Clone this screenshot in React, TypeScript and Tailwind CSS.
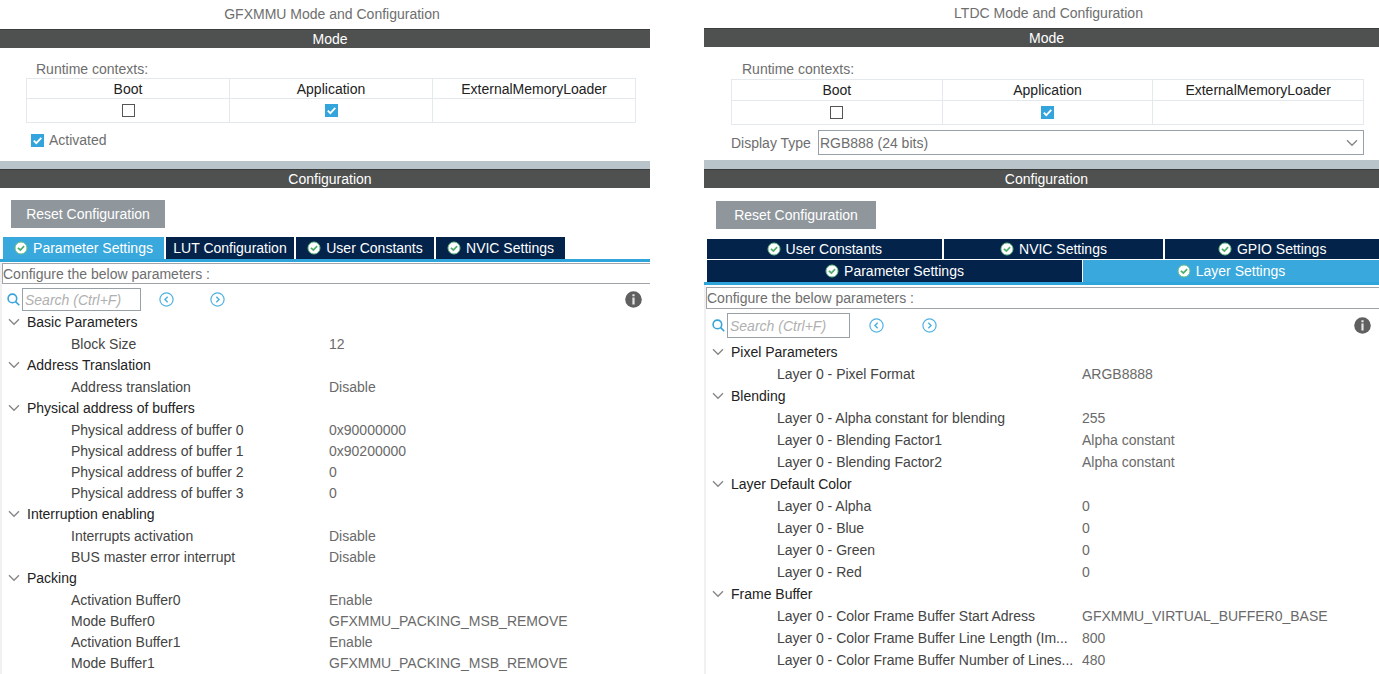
import { useState } from "react";
import type { ReactNode } from "react";

type Group = { name: string; rows: [string, string][] };

const gfxGroups: Group[] = [
  { name: "Basic Parameters", rows: [["Block Size", "12"]] },
  { name: "Address Translation", rows: [["Address translation", "Disable"]] },
  {
    name: "Physical address of buffers",
    rows: [
      ["Physical address of buffer 0", "0x90000000"],
      ["Physical address of buffer 1", "0x90200000"],
      ["Physical address of buffer 2", "0"],
      ["Physical address of buffer 3", "0"],
    ],
  },
  {
    name: "Interruption enabling",
    rows: [
      ["Interrupts activation", "Disable"],
      ["BUS master error interrupt", "Disable"],
    ],
  },
  {
    name: "Packing",
    rows: [
      ["Activation Buffer0", "Enable"],
      ["Mode Buffer0", "GFXMMU_PACKING_MSB_REMOVE"],
      ["Activation Buffer1", "Enable"],
      ["Mode Buffer1", "GFXMMU_PACKING_MSB_REMOVE"],
    ],
  },
];

const ltdcGroups: Group[] = [
  { name: "Pixel Parameters", rows: [["Layer 0 - Pixel Format", "ARGB8888"]] },
  {
    name: "Blending",
    rows: [
      ["Layer 0 - Alpha constant for blending", "255"],
      ["Layer 0 - Blending Factor1", "Alpha constant"],
      ["Layer 0 - Blending Factor2", "Alpha constant"],
    ],
  },
  {
    name: "Layer Default Color",
    rows: [
      ["Layer 0 - Alpha", "0"],
      ["Layer 0 - Blue", "0"],
      ["Layer 0 - Green", "0"],
      ["Layer 0 - Red", "0"],
    ],
  },
  {
    name: "Frame Buffer",
    rows: [
      ["Layer 0 - Color Frame Buffer Start Adress", "GFXMMU_VIRTUAL_BUFFER0_BASE"],
      ["Layer 0 - Color Frame Buffer Line Length (Im...", "800"],
      ["Layer 0 - Color Frame Buffer Number of Lines...", "480"],
    ],
  },
];

function Check({ id, label, checked }: { id: string; label?: string; checked?: boolean }) {
  return (
    <span className="relative inline-flex size-[13px] shrink-0">
      <input
        id={id}
        type="checkbox"
        aria-label={label}
        defaultChecked={checked}
        className="peer size-[13px] appearance-none border border-[#555] bg-white checked:border-[#34a5dc] checked:bg-[#34a5dc]"
      />
      <svg
        viewBox="0 0 13 13"
        className="pointer-events-none absolute inset-0 hidden size-[13px] peer-checked:block"
        fill="none"
        stroke="#fff"
        strokeWidth="1.8"
      >
        <path d="M2.8 6.6 5.3 9.2 10.3 3.8" />
      </svg>
    </span>
  );
}

function OkIcon() {
  return (
    <svg viewBox="0 0 14 14" className="size-[14px] shrink-0" fill="none">
      <circle cx="7" cy="7" r="6" fill="#fff" stroke="#6cc088" strokeWidth="1" />
      <path d="M3.9 6.8 6.4 9 10.1 5.2" stroke="#4fae6e" strokeWidth="1.7" />
    </svg>
  );
}

function Chevron() {
  return (
    <svg viewBox="0 0 12 8" className="h-2 w-3 shrink-0" fill="none" stroke="#858585" strokeWidth="1.3">
      <path d="M1 1.3 6 6.3 11 1.3" />
    </svg>
  );
}

function Arrow({ next }: { next?: boolean }) {
  return (
    <button type="button" aria-label={next ? "Next match" : "Previous match"} className="size-[15px] shrink-0">
      <svg viewBox="0 0 15 15" className="size-[15px]" fill="none" stroke="#4fb2e0">
        <circle cx="7.5" cy="7.5" r="6.6" strokeWidth="1.2" />
        <path d={next ? "M6.3 4.8 9 7.5 6.3 10.2" : "M8.7 4.8 6 7.5 8.7 10.2"} strokeWidth="1.5" />
      </svg>
    </button>
  );
}

function Bar({ children }: { children: ReactNode }) {
  return (
    <h2 className="h-[19px] border-t border-[#3c3e3d] bg-[#4f5150] pl-[10px] text-center leading-[19px] text-white">
      {children}
    </h2>
  );
}

function Contexts({ id, rowClass, headClass }: { id: string; rowClass: string; headClass: string }) {
  return (
    <table className="w-full table-fixed border-collapse text-center text-[#222]">
      <thead>
        <tr className={headClass}>
          {["Boot", "Application", "ExternalMemoryLoader"].map((c) => (
            <th key={c} className="border border-[#e3e9ec] p-0 font-normal leading-4">
              {c}
            </th>
          ))}
        </tr>
      </thead>
      <tbody>
        <tr className={rowClass}>
          <td className="border border-[#e3e9ec] p-0">
            <div className="flex justify-center">
              <Check id={id + "-boot"} label="Boot" />
            </div>
          </td>
          <td className="border border-[#e3e9ec] p-0">
            <div className="flex justify-center">
              <Check id={id + "-app"} label="Application" checked />
            </div>
          </td>
          <td className="border border-[#e3e9ec] p-0" />
        </tr>
      </tbody>
    </table>
  );
}

function Tab({ label, ok, active, className }: { label: string; ok?: boolean; active?: boolean; className: string }) {
  return (
    <button
      type="button"
      role="tab"
      aria-selected={!!active}
      className={
        "flex items-center justify-center gap-[5px] whitespace-nowrap text-white " +
        (active ? "bg-[#39a8dc] " : "bg-[#03234b] ") +
        className
      }
    >
      {ok && <OkIcon />}
      {label}
    </button>
  );
}

function SearchRow({
  id,
  className,
  inputClass,
  arrowsClass,
}: {
  id: string;
  className: string;
  inputClass: string;
  arrowsClass: string;
}) {
  return (
    <div className={"flex items-center " + className}>
      <label htmlFor={id} aria-label="Search" className="mr-[2px] shrink-0">
        <svg viewBox="0 0 13 13" className="size-[13px]" fill="none" stroke="#39a3da" strokeWidth="1.6">
          <circle cx="5.4" cy="5.4" r="4.3" />
          <path d="M8.6 8.6 12.3 12.3" />
        </svg>
      </label>
      <input
        id={id}
        type="text"
        placeholder="Search (Ctrl+F)"
        className={
          "border border-[#98a1a8] bg-white px-0.5 italic text-[#555] placeholder:text-[#b0b0b0] " + inputClass
        }
      />
      <div className={"flex flex-1 " + arrowsClass}>
        <Arrow />
        <Arrow next />
      </div>
      <button type="button" aria-label="Information" className="mr-2 size-[17px]">
        <svg viewBox="0 0 17 17" className="size-[17px]">
          <circle cx="8.5" cy="8.5" r="8.3" fill="#606060" />
          <path d="M7.4 3.2h2.2v2H7.4zM7.4 6.4h2.2v7H7.4z" fill="#e6e6e6" />
        </svg>
      </button>
    </div>
  );
}

function Tree({
  groups,
  row,
  head,
  labelCol,
  indent,
}: {
  groups: Group[];
  row: string;
  head: string;
  labelCol: string;
  indent: string;
}) {
  const [closed, setClosed] = useState<string[]>([]);
  const toggle = (n: string) => setClosed((c) => (c.includes(n) ? c.filter((x) => x !== n) : [...c, n]));
  return (
    <table className="w-full table-fixed border-collapse whitespace-nowrap text-left">
      <colgroup>
        <col className={labelCol} />
        <col />
      </colgroup>
      {groups.map((g) => (
        <tbody key={g.name}>
          <tr className={head}>
            <th colSpan={2} className="p-0 font-normal">
              <button
                type="button"
                aria-expanded={!closed.includes(g.name)}
                onClick={() => toggle(g.name)}
                className="flex items-center gap-[7px] pl-[6px] leading-5 text-[#222]"
              >
                <Chevron />
                {g.name}
              </button>
            </th>
          </tr>
          {!closed.includes(g.name) &&
            g.rows.map(([k, v]) => (
              <tr key={k} className={row}>
                <th scope="row" className={"p-0 font-normal leading-5 text-[#444] " + indent}>
                  {k}
                </th>
                <td className="p-0 leading-5 text-[#6a6a6a]">{v}</td>
              </tr>
            ))}
        </tbody>
      ))}
    </table>
  );
}

function ResetButton({ className }: { className: string }) {
  return (
    <button type="button" className={"block h-7 bg-[#8f979d] text-center text-white " + className}>
      Reset Configuration
    </button>
  );
}

function GfxPanel() {
  return (
    <section className="flex min-w-0 flex-[650] flex-col">
      <h1 className="h-[29px] pl-[14px] text-center leading-[29px] text-[#6e6e6e]">GFXMMU Mode and Configuration</h1>
      <Bar>Mode</Bar>
      <div className="h-[113px] pt-3 pr-[14px] pl-[26px]">
        <p className="pl-[10px] leading-[18px] text-[#6e6e6e]">Runtime contexts:</p>
        <Contexts id="gfx" headClass="h-5" rowClass="h-6" />
        <label htmlFor="gfx-activated" className="mt-[7px] ml-[5px] flex items-center gap-[5px] text-[#6e6e6e]">
          <Check id="gfx-activated" checked />
          Activated
        </label>
      </div>
      <div className="h-2 bg-[#b8c4ca]" />
      <Bar>Configuration</Bar>
      <div className="pt-3 pl-[11px]">
        <ResetButton className="w-[154px]" />
      </div>
      <div role="tablist" className="mt-[9px] flex gap-0.5 border-b-3 border-[#2fa5dc] pl-[3px]">
        <Tab label="Parameter Settings" ok active className="h-[22px] w-[161px]" />
        <Tab label="LUT Configuration" className="h-[22px] w-[128px]" />
        <Tab label="User Constants" ok className="h-[22px] w-[138px]" />
        <Tab label="NVIC Settings" ok className="h-[22px] w-[129px]" />
      </div>
      <div className="flex-1 border-l-2 border-[#f0f0f0]">
        <p className="mt-px h-[21px] border border-r-0 border-[#a0a4a8] leading-5 text-[#6e6e6e]">
          Configure the below parameters :
        </p>
        <SearchRow
          id="gfx-search"
          className="pt-1 pl-[5px]"
          inputClass="h-[23px] w-[119px]"
          arrowsClass="ml-[18px] gap-9"
        />
        <Tree groups={gfxGroups} head="h-[22px]" row="h-[21px]" labelCol="w-[327px]" indent="pl-[69px]" />
      </div>
    </section>
  );
}

function LtdcPanel() {
  return (
    <section className="flex min-w-0 flex-[675] flex-col">
      <h1 className="h-7 pl-[14px] text-center leading-[26px] text-[#6e6e6e]">LTDC Mode and Configuration</h1>
      <Bar>Mode</Bar>
      <div className="h-[113px] pt-[13px] pr-[15px] pl-[27px]">
        <p className="pl-[11px] leading-[19px] text-[#6e6e6e]">Runtime contexts:</p>
        <Contexts id="ltdc" headClass="h-[21px]" rowClass="h-6" />
        <div className="mt-[5px] flex items-center gap-[7px] text-[#6e6e6e]">
          <label htmlFor="display-type" className="whitespace-nowrap">
            Display Type
          </label>
          <div className="relative flex-1">
            <select
              id="display-type"
              className="block h-[25px] w-full appearance-none border border-[#98a1a8] bg-white px-px text-[#6e6e6e]"
            >
              <option>RGB888 (24 bits)</option>
            </select>
            <span className="pointer-events-none absolute inset-y-0 right-[6px] flex items-center">
              <Chevron />
            </span>
          </div>
        </div>
      </div>
      <div className="h-[9px] bg-[#b8c4ca]" />
      <Bar>Configuration</Bar>
      <div className="pt-[13px] pl-3">
        <ResetButton className="w-40" />
      </div>
      <div role="tablist" className="mt-[10px] border-b-3 border-[#2fa5dc] pl-[3px]">
        <div className="mb-px flex gap-0.5">
          <Tab label="User Constants" ok className="h-5 flex-[235]" />
          <Tab label="NVIC Settings" ok className="h-5 flex-[220]" />
          <Tab label="GPIO Settings" ok className="h-5 flex-[214]" />
        </div>
        <div className="flex gap-px">
          <Tab label="Parameter Settings" ok className="h-[22px] flex-[375]" />
          <Tab label="Layer Settings" ok active className="h-[22px] flex-[296]" />
        </div>
      </div>
      <div className="flex-1 border-l-2 border-[#f0f0f0]">
        <p className="mt-0.5 h-[22px] border border-r-0 border-[#a0a4a8] leading-5 text-[#6e6e6e]">
          Configure the below parameters :
        </p>
        <SearchRow
          id="ltdc-search"
          className="pt-1 pb-[3px] pl-[6px]"
          inputClass="h-[25px] w-[123px]"
          arrowsClass="ml-[19px] gap-[38px]"
        />
        <Tree groups={ltdcGroups} head="h-[22px]" row="h-[22px]" labelCol="w-[376px]" indent="pl-[71px]" />
      </div>
    </section>
  );
}

export default function App() {
  return (
    <main className="flex min-h-screen gap-[54px] bg-white font-['Liberation_Sans',Arial,sans-serif] text-[14px] leading-5">
      <GfxPanel />
      <LtdcPanel />
    </main>
  );
}
